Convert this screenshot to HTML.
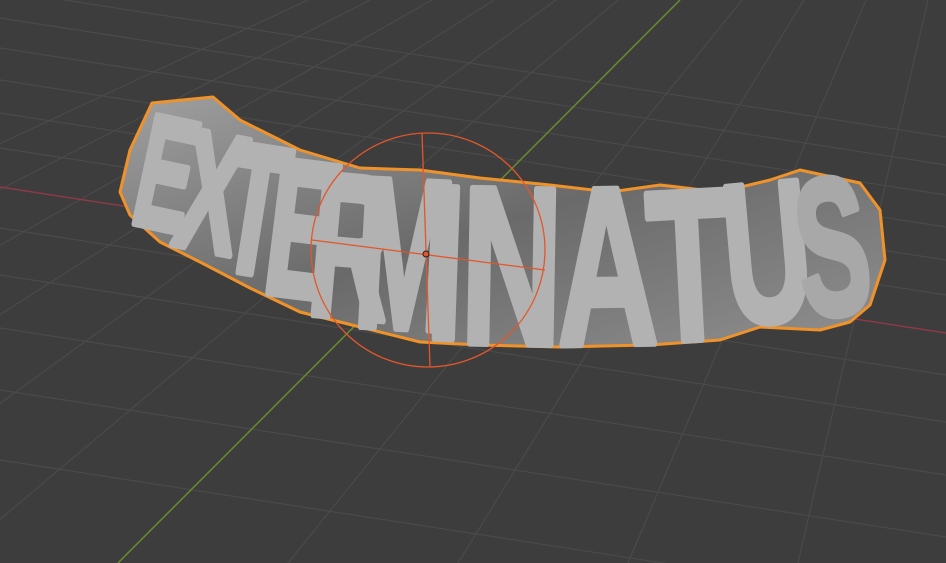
<!DOCTYPE html>
<html><head><meta charset="utf-8"><style>
html,body{margin:0;padding:0;background:#3d3d3d;width:946px;height:563px;overflow:hidden}
svg{display:block}
</style></head><body>
<svg width="946" height="563" viewBox="0 0 946 563" xmlns="http://www.w3.org/2000/svg">
<defs>
<linearGradient id="side" x1="0" y1="0" x2="1" y2="1">
<stop offset="0" stop-color="#a0a0a0"/><stop offset="0.5" stop-color="#6a6a6a"/><stop offset="1" stop-color="#909090"/>
</linearGradient>
<clipPath id="c"><rect width="946" height="563"/></clipPath>
</defs>
<g clip-path="url(#c)">
<rect width="946" height="563" fill="#3d3d3d"/>
<g stroke="#4a4a4a" stroke-width="1.2" fill="none">
<line x1="0" y1="-10" x2="946" y2="137"/>
<line x1="0" y1="18" x2="946" y2="165"/>
<line x1="0" y1="48" x2="946" y2="195"/>
<line x1="0" y1="80" x2="946" y2="227"/>
<line x1="0" y1="113" x2="946" y2="260"/>
<line x1="0" y1="148" x2="946" y2="295"/>
<line x1="0" y1="228" x2="946" y2="375"/>
<line x1="0" y1="275" x2="946" y2="422"/>
<line x1="0" y1="328" x2="946" y2="475"/>
<line x1="0" y1="390" x2="946" y2="537"/>
<line x1="0" y1="460" x2="946" y2="607"/>
<line x1="-900" y1="563" x2="308" y2="0"/>
<line x1="-730" y1="563" x2="370" y2="0"/>
<line x1="-560" y1="563" x2="432" y2="0"/>
<line x1="-390" y1="563" x2="494" y2="0"/>
<line x1="-220" y1="563" x2="556" y2="0"/>
<line x1="-52" y1="563" x2="618" y2="0"/>
<line x1="288" y1="563" x2="742" y2="0"/>
<line x1="458" y1="563" x2="804" y2="0"/>
<line x1="628" y1="563" x2="866" y2="0"/>
<line x1="798" y1="563" x2="928" y2="0"/>
<line x1="968" y1="563" x2="990" y2="0"/>
<line x1="1138" y1="563" x2="1052" y2="0"/>
</g>
<line x1="0" y1="187" x2="946" y2="333" stroke="#8a3a48" stroke-width="1.5"/>
<line x1="118" y1="563" x2="680" y2="0" stroke="#6a8a2e" stroke-width="1.5"/>
<path d="M152,103 L213,97 L240,120 L300,150 L360,168 L420,170 L480,178 L550,185 L610,192 L660,185 L720,192 L770,180 L800,170 L860,183 L880,210 L885,260 L870,305 L850,322 L820,330 L760,327 L720,340 L650,345 L560,347 L480,345 L420,342 L360,327 L300,312 L250,288 L200,262 L160,242 L130,215 L120,192 L130,150 Z" fill="url(#side)" stroke="#f0922a" stroke-width="3" stroke-linejoin="round"/>
<g font-family="Liberation Sans, sans-serif" font-weight="bold" fill="#b2b2b2" stroke="#b2b2b2" stroke-width="7" stroke-linejoin="round">
<text transform="translate(128,222) rotate(12) scale(0.52,1)" font-size="160">E</text>
<text transform="translate(170,244) rotate(11) scale(0.55,1)" font-size="170">X</text>
<text transform="translate(214,268) rotate(9) scale(0.55,1)" font-size="185">T</text>
<text transform="translate(260,292) rotate(7) scale(0.55,1)" font-size="195">E</text>
<text transform="translate(305,314) rotate(5) scale(0.55,1)" font-size="205">R</text>
<text transform="translate(352,326) rotate(3) scale(0.55,1)" font-size="215">M</text>
<text transform="translate(425,338) rotate(2) scale(0.6,1)" font-size="220">I</text>
<text transform="translate(460,343) rotate(1) scale(0.62,1)" font-size="225">N</text>
<text transform="translate(558,345) rotate(-1) scale(0.62,1)" font-size="225">A</text>
<text transform="translate(652,342) rotate(-3) scale(0.62,1)" font-size="215">T</text>
<text transform="translate(730,325) rotate(-5) scale(0.6,1)" font-size="200">U</text>
<text transform="translate(805,318) rotate(-7) scale(0.55,1)" font-size="195" fill="#a8a8a8" stroke="#a8a8a8">S</text>
</g>
<g stroke="#e2562a" stroke-width="1.3" fill="none">
<circle cx="428" cy="250" r="117"/>
<line x1="422" y1="133" x2="430" y2="367"/>
<line x1="312" y1="240" x2="545" y2="270"/>
</g>
<circle cx="426" cy="254" r="3" fill="#e2562a" stroke="#222" stroke-width="1"/>
</g>
</svg>
</body></html>
